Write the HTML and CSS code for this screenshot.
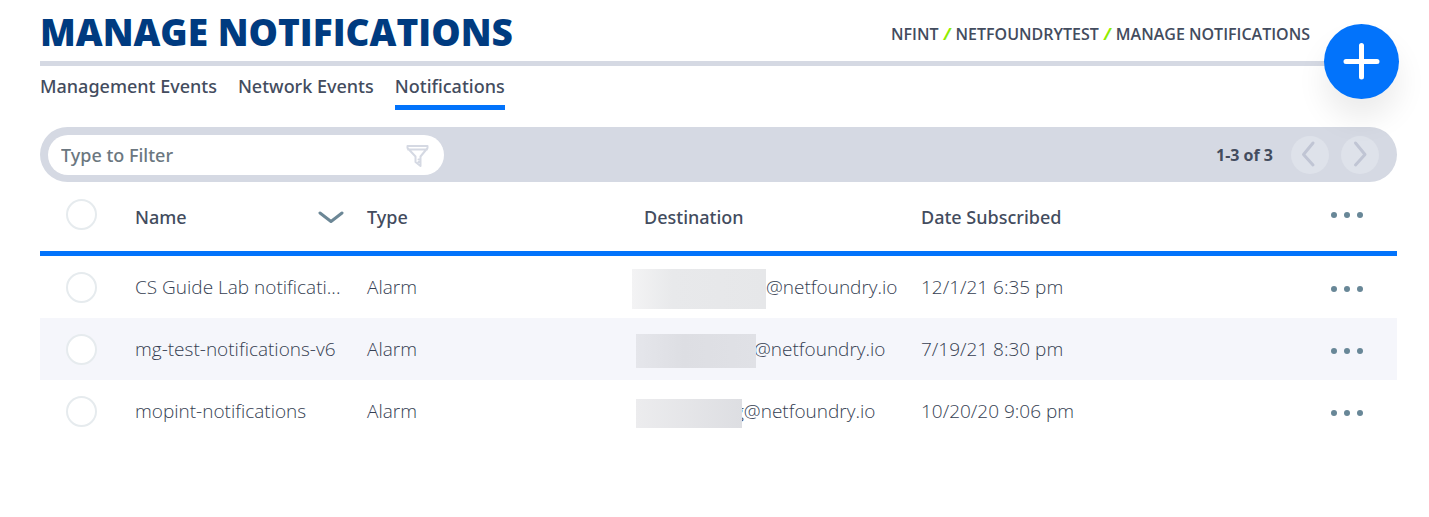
FILE: index.html
```html
<!DOCTYPE html>
<html lang="en">
<head>
    <meta charset="UTF-8">
    <title>Manage Notifications</title>
    <link rel="stylesheet" href="styles.css">
</head>
<body>
    <svg class="sprite">
        <symbol id="dots" viewBox="0 0 34 8">
            <circle cx="4" cy="4" r="3"/>
            <circle cx="17" cy="4" r="3"/>
            <circle cx="30" cy="4" r="3"/>
        </symbol>
    </svg>
    <div class="page">
        <header class="header">
            <h1>Manage Notifications</h1>
            <nav class="crumbs">
                <a href="#">NFINT</a> <i>/</i> <a href="#">NETFOUNDRYTEST</a> <i>/</i> <a href="#">MANAGE NOTIFICATIONS</a>
            </nav>
            <button class="add" aria-label="Add notification">
                <svg width="75" height="75" viewBox="0 0 75 75"><path d="M37.500 21.500V53M22 37.500H53"/></svg>
            </button>
        </header>

        <nav class="tabs">
            <a href="#">Management Events</a>
            <a href="#">Network Events</a>
            <a href="#" class="active">Notifications</a>
        </nav>

        <div class="toolbar">
            <label class="filter">
                <input type="text" placeholder="Type to Filter" aria-label="Type to Filter">
                <svg width="24" height="24" viewBox="0 0 24 24">
                    <path d="M2.500 3h20v2l-7 8.500v9.500l-5-4v-5.500L2.500 5zM3 6.500h19M13.500 16.500h2M13.500 19h2"/>
                </svg>
            </label>
            <div class="pager">
                <span>1-3 of 3</span>
                <button aria-label="Previous page"><svg width="38" height="38" viewBox="0 0 38 38"><path d="M22 7L12.500 18.500L22 29"/></svg></button>
                <button aria-label="Next page"><svg width="38" height="38" viewBox="0 0 38 38"><path d="M14.500 7L24 18.500L14.500 29"/></svg></button>
            </div>
        </div>

        <table class="grid">
            <colgroup>
                <col class="col-check"><col class="col-name"><col class="col-type"><col class="col-dest"><col><col class="col-menu">
            </colgroup>
            <thead>
                <tr>
                    <th><input type="checkbox" aria-label="Select all"></th>
                    <th>
                        <div class="sort">Name
                            <svg width="26" height="14" viewBox="0 0 26 14"><path d="M2 3L13 11.500L24 3"/></svg>
                        </div>
                    </th>
                    <th>Type</th>
                    <th>Destination</th>
                    <th>Date Subscribed</th>
                    <th><button class="menu" aria-label="Table actions"><svg width="34" height="8"><use href="#dots"/></svg></button></th>
                </tr>
            </thead>
            <tbody>
                <tr>
                    <td><input type="checkbox" aria-label="Select CS Guide Lab"></td>
                    <td>CS Guide Lab notificati...</td>
                    <td>Alarm</td>
                    <td><div class="dest"><span class="mask mask-lg"></span>@netfoundry.io</div></td>
                    <td>12/1/21 6:35 pm</td>
                    <td><button class="menu" aria-label="Row actions"><svg width="34" height="8"><use href="#dots"/></svg></button></td>
                </tr>
                <tr>
                    <td><input type="checkbox" aria-label="Select mg-test-notifications-v6"></td>
                    <td>mg-test-notifications-v6</td>
                    <td>Alarm</td>
                    <td><div class="dest"><span class="mask mask-md"></span>@netfoundry.io</div></td>
                    <td>7/19/21 8:30 pm</td>
                    <td><button class="menu" aria-label="Row actions"><svg width="34" height="8"><use href="#dots"/></svg></button></td>
                </tr>
                <tr>
                    <td><input type="checkbox" aria-label="Select mopint-notifications"></td>
                    <td>mopint-notifications</td>
                    <td>Alarm</td>
                    <td><div class="dest"><span class="mask mask-sm"></span>g@netfoundry.io</div></td>
                    <td>10/20/20 9:06 pm</td>
                    <td><button class="menu" aria-label="Row actions"><svg width="34" height="8"><use href="#dots"/></svg></button></td>
                </tr>
            </tbody>
        </table>
    </div>
</body>
</html>
```
FILE: styles.css
```css
* {
    margin: 0;
    padding: 0;
    box-sizing: border-box;
}
body {
    background: #fff;
    color: #434c5e;
    font-family: "Open Sans", sans-serif;
    font-size: 18px;
    line-height: 24px;
}
a {
    color: inherit;
    text-decoration: none;
}
button {
    border: 0;
    background: none;
    cursor: pointer;
}
svg {
    display: block;
    fill: none;
    stroke-linecap: round;
    stroke-linejoin: round;
}
.sprite {
    position: absolute;
    width: 0;
    height: 0;
}
.page {
    padding: 0 32px 0 40px;
}

/* header */
.header {
    position: relative;
    display: flex;
    justify-content: space-between;
    align-items: flex-start;
    height: 66px;
    padding: 8px 87px 0 0;
    border-bottom: 5px solid #d5d9e3;
}
h1 {
    color: #003b80;
    font-size: 37px;
    font-weight: 800;
    line-height: 48px;
    text-transform: uppercase;
}
.crumbs {
    padding-top: 14px;
    font-size: 16px;
    font-weight: 600;
}
.crumbs i {
    padding: 0 1px;
    color: #8fec00;
    font-weight: 700;
}
.add {
    position: absolute;
    z-index: 1;
    top: 24px;
    right: -2px;
    width: 75px;
    height: 75px;
    border-radius: 50%;
    background: #0273fb;
    box-shadow: 0 20px 30px rgba(0, 0, 0, 0.08);
}
.add svg {
    stroke: #fff;
    stroke-width: 5;
}

/* tabs */
.tabs {
    display: flex;
    gap: 21px;
    padding-top: 8px;
    font-family: "Noto Sans", sans-serif;
    font-weight: 500;
}
.tabs a {
    height: 36px;
}
.tabs .active {
    border-bottom: 5px solid #0273fb;
}

/* filter bar */
.toolbar {
    display: flex;
    justify-content: space-between;
    align-items: center;
    height: 55px;
    margin-top: 17px;
    padding: 0 18px 0 8px;
    border-radius: 28px;
    background: #d5d9e3;
}
.filter {
    display: flex;
    align-items: center;
    width: 396px;
    height: 40px;
    padding: 0 15px 0 13px;
    border-radius: 20px;
    background: #fff;
}
.filter input {
    flex: 1;
    border: 0;
    outline: 0;
    font: 500 18px/24px "Noto Sans", sans-serif;
}
.filter input::placeholder {
    color: #6b7780;
}
.filter svg {
    stroke: #d5d9e3;
    stroke-width: 2;
}
.pager {
    display: flex;
    align-items: center;
    gap: 12px;
    font-size: 16px;
    font-weight: 700;
}
.pager span {
    margin-right: 6px;
}
.pager button {
    width: 38px;
    height: 38px;
    border-radius: 50%;
    background: #dee2ea;
}
.pager svg {
    stroke: #c0c5d4;
    stroke-width: 3;
}

/* table */
.grid {
    width: 100%;
    table-layout: fixed;
    border-spacing: 0;
}
.col-check { width: 95px; }
.col-name { width: 232px; }
.col-type, .col-dest { width: 277px; }
.col-menu { width: 67px; }
th {
    height: 74px;
    border-bottom: 5px solid #0273fb;
    font-family: "Noto Sans", sans-serif;
    font-weight: 500;
    text-align: left;
}
td {
    height: 62px;
    color: #353e52;
    font-size: 19px;
    font-weight: 300;
    white-space: nowrap;
}
tbody tr:nth-child(even) {
    background: #f5f6fb;
}
.sort {
    display: flex;
    justify-content: space-between;
    align-items: center;
    padding-right: 23px;
}
.sort svg {
    stroke: #6c8796;
    stroke-width: 3;
}
input[type=checkbox] {
    display: block;
    appearance: none;
    width: 31px;
    height: 31px;
    margin-left: 26px;
    border: 2px solid #e6ebee;
    border-radius: 50%;
    background: #fff;
}
th input[type=checkbox] {
    margin-bottom: 5px;
}
.menu {
    display: block;
}
th .menu {
    padding-bottom: 3px;
}
td .menu {
    padding-top: 3px;
}
.menu svg {
    fill: #688797;
}

/* blanked out mailbox names */
.dest {
    display: flex;
    align-items: center;
    margin-left: -8px;
}
.mask {
    position: relative;
    margin-top: 4px;
    background: linear-gradient(90deg, #ececee, #dddee2);
}
.mask-lg {
    width: 134px;
    height: 40px;
    margin-left: -4px;
    background: linear-gradient(90deg, #f3f3f4, #e8e9eb 30%, #e6e7e9);
}
.mask-md {
    width: 120px;
    height: 34px;
    margin-right: -2px;
    background: linear-gradient(90deg, #e5e6eb, #dddee3 40%, #e0e1e6);
}
.mask-sm {
    width: 106px;
    height: 29px;
    margin-right: -8px;
}
```
